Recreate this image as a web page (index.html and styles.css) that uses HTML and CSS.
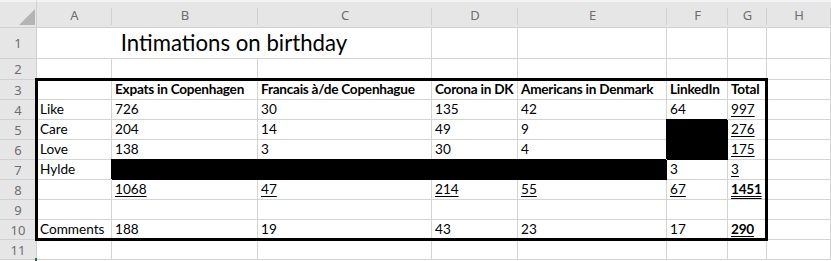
FILE: index.html
```html
<!DOCTYPE html>
<html lang="en">
<head>
<meta charset="utf-8">
<title>Intimations on birthday</title>
<link rel="stylesheet" href="styles.css">
</head>
<body>
<div class="sheet">
  <!-- column headings -->
  <div class="corner">
    <svg width="16" height="16" viewBox="0 0 16 16"><polygon points="16,0 16,16 0,16" fill="#b4b4b4"/></svg>
  </div>
  <div class="ch">A</div>
  <div class="ch">B</div>
  <div class="ch">C</div>
  <div class="ch">D</div>
  <div class="ch">E</div>
  <div class="ch">F</div>
  <div class="ch">G</div>
  <div class="ch">H</div>

  <!-- row 1 -->
  <div class="rh">1</div>
  <div class="c title span3">Intimations on birthday</div>
  <div class="c"></div><div class="c"></div><div class="c"></div><div class="c"></div><div class="c"></div>

  <!-- row 2 -->
  <div class="rh">2</div>
  <div class="c"></div><div class="c"></div><div class="c"></div><div class="c"></div><div class="c"></div><div class="c"></div><div class="c"></div><div class="c"></div>

  <!-- row 3 -->
  <div class="rh">3</div>
  <div class="c"></div>
  <div class="c b">Expats in Copenhagen</div>
  <div class="c b">Francais à/de Copenhague</div>
  <div class="c b">Corona in DK</div>
  <div class="c b">Americans in Denmark</div>
  <div class="c b">LinkedIn</div>
  <div class="c b">Total</div>
  <div class="c"></div>

  <!-- row 4 -->
  <div class="rh">4</div>
  <div class="c">Like</div>
  <div class="c">726</div>
  <div class="c">30</div>
  <div class="c">135</div>
  <div class="c">42</div>
  <div class="c">64</div>
  <div class="c"><u>997</u></div>
  <div class="c"></div>

  <!-- row 5 -->
  <div class="rh">5</div>
  <div class="c">Care</div>
  <div class="c">204</div>
  <div class="c">14</div>
  <div class="c">49</div>
  <div class="c">9</div>
  <div class="c fill"></div>
  <div class="c"><u>276</u></div>
  <div class="c"></div>

  <!-- row 6 -->
  <div class="rh">6</div>
  <div class="c">Love</div>
  <div class="c">138</div>
  <div class="c">3</div>
  <div class="c">30</div>
  <div class="c">4</div>
  <div class="c fill"></div>
  <div class="c"><u>175</u></div>
  <div class="c"></div>

  <!-- row 7 -->
  <div class="rh">7</div>
  <div class="c">Hylde</div>
  <div class="c fill span4"></div>
  <div class="c">3</div>
  <div class="c"><u>3</u></div>
  <div class="c"></div>

  <!-- row 8 -->
  <div class="rh">8</div>
  <div class="c"></div>
  <div class="c"><u>1068</u></div>
  <div class="c"><u>47</u></div>
  <div class="c"><u>214</u></div>
  <div class="c"><u>55</u></div>
  <div class="c"><u>67</u></div>
  <div class="c b"><u class="dbl">1451</u></div>
  <div class="c"></div>

  <!-- row 9 -->
  <div class="rh">9</div>
  <div class="c"></div><div class="c"></div><div class="c"></div><div class="c"></div><div class="c"></div><div class="c"></div><div class="c"></div><div class="c"></div>

  <!-- row 10 -->
  <div class="rh">10</div>
  <div class="c">Comments</div>
  <div class="c">188</div>
  <div class="c">19</div>
  <div class="c">43</div>
  <div class="c">23</div>
  <div class="c">17</div>
  <div class="c b"><u class="dbl">290</u></div>
  <div class="c"></div>

  <!-- row 11 -->
  <div class="rh">11</div>
  <div class="c"></div><div class="c"></div><div class="c"></div><div class="c"></div><div class="c"></div><div class="c"></div><div class="c"></div><div class="c"></div>

  <!-- thick outline around A3:G10 -->
  <div class="outline"></div>
  <!-- active row marker -->
  <div class="marker"></div>
</div>
</body>
</html>
```

FILE: styles.css
```css
html, body {
  margin: 0;
  padding: 0;
  background: #ffffff;
  overflow: hidden;
}

.sheet {
  position: relative;
  width: 831px;
  height: 261px;
  display: grid;
  grid-template-columns: 37px 75px 146px 174px 86px 149px 61px 39px 64px;
  grid-template-rows: 28px 31px 21px repeat(9, 20px);
  font-family: "Lato", "Liberation Sans", sans-serif;
  font-size: 13.6px;
  color: #000;
}

.corner {
  box-sizing: border-box;
  background: #e6e6e6;
  border-top: 2px solid #f3f3f3;
  border-bottom: 1px solid #d0d0d0;
  border-right: 1px solid #d0d0d0;
  display: flex;
  align-items: flex-end;
  justify-content: flex-end;
  padding: 0 1px 2px 0;
}

.ch {
  box-sizing: border-box;
  background:
    linear-gradient(#d0d0d0, #d0d0d0) right 6px / 1px 17px no-repeat,
    #e6e6e6;
  border-top: 2px solid #f3f3f3;
  border-bottom: 1px solid #d0d0d0;
  display: flex;
  align-items: center;
  justify-content: center;
  padding-top: 1px;
  font-family: "Noto Sans", "Open Sans", sans-serif;
  font-size: 13px;
  color: #6e6e6e;
}

.rh {
  box-sizing: border-box;
  background: #e6e6e6;
  border-bottom: 1px solid #d0d0d0;
  border-right: 1px solid #d0d0d0;
  display: flex;
  align-items: center;
  justify-content: center;
  font-family: "Noto Sans", "Open Sans", sans-serif;
  font-size: 13px;
  color: #6e6e6e;
}

.c {
  box-sizing: border-box;
  border-right: 1px solid #d4d4d4;
  border-bottom: 1px solid #d4d4d4;
  display: flex;
  align-items: flex-end;
  padding: 0 0 2px 3px;
  line-height: 16px;
  white-space: nowrap;
}

.b {
  font-weight: 700;
  letter-spacing: -0.25px;
}

u {
  text-decoration-thickness: 1px;
  text-underline-offset: 2px;
}

u.dbl {
  text-decoration-style: double;
}

.title {
  justify-content: center;
  font-size: 22.2px;
  line-height: 28px;
  padding: 0 0 1px 0;
}

.span3 { grid-column: span 3; }
.span4 { grid-column: span 4; }

.fill {
  background: #000;
  border-color: #000;
  box-shadow: -1px -1px 0 #000;
}

.outline {
  position: absolute;
  left: 35px;
  top: 78px;
  width: 733px;
  height: 163px;
  box-sizing: border-box;
  border: 3px solid #000;
  pointer-events: none;
}

.marker {
  position: absolute;
  left: 35px;
  top: 258px;
  width: 2px;
  height: 3px;
  background: #217346;
}
```
